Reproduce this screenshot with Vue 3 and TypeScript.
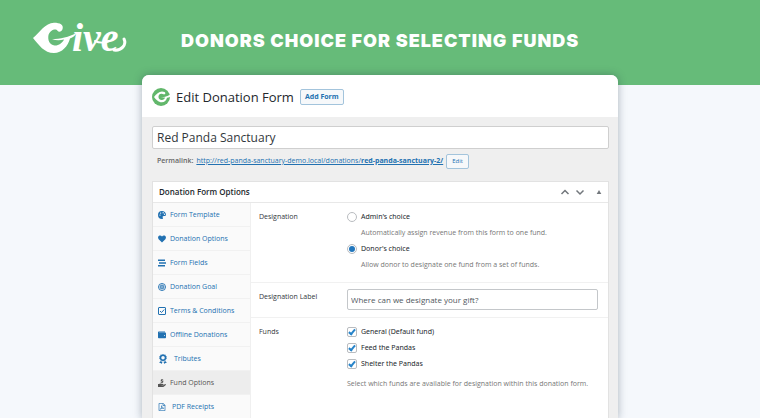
<script setup lang="ts">
import { ref } from 'vue'

interface Tab {
  id: string
  label: string
}

interface Choice {
  value: string
  label: string
  help: string
}

interface Fund {
  id: string
  label: string
  enabled: boolean
}

const tabs: Tab[] = [
  { id: 'template', label: 'Form Template' },
  { id: 'options', label: 'Donation Options' },
  { id: 'fields', label: 'Form Fields' },
  { id: 'goal', label: 'Donation Goal' },
  { id: 'terms', label: 'Terms & Conditions' },
  { id: 'offline', label: 'Offline Donations' },
  { id: 'tributes', label: 'Tributes' },
  { id: 'funds', label: 'Fund Options' },
  { id: 'pdf', label: 'PDF Receipts' },
]

const choices: Choice[] = [
  { value: 'admin', label: "Admin's choice", help: 'Automatically assign revenue from this form to one fund.' },
  { value: 'donor', label: "Donor's choice", help: 'Allow donor to designate one fund from a set of funds.' },
]

const activeTab = ref('funds')
const formTitle = ref('Red Panda Sanctuary')
const designation = ref('donor')
const designationLabel = ref('Where can we designate your gift?')
const funds = ref<Fund[]>([
  { id: 'general', label: 'General (Default fund)', enabled: true },
  { id: 'feed', label: 'Feed the Pandas', enabled: true },
  { id: 'shelter', label: 'Shelter the Pandas', enabled: true },
])
</script>

<template>
  <div class="page">
    <header class="banner">
      <svg class="brand" viewBox="0 0 96 36" role="img" aria-label="Give">
        <path class="leaf" d="M0 15C7 9 12 0 21-.3c6 0 10 2 8.500 6.500-.8 2.500-3.500 3.300-5 1.600C23 5 17 7 15.500 12c-1 5 1 10 6 10.500 4 .3 8-2.500 9.500-6-4 1-8 1-12-.3 8 0 17-2 25-6.700-1.500 3-4 5-7 6C35 23 29 30 21 30 11 30 6 22 0 15Z" />
        <text class="script" x="39" y="28">ive</text>
        <path class="tail" d="M81 27c7 1 13-5 10-11" />
        <path class="swash" d="M62 18c4 2 10 2 14 0" />
      </svg>
      <h1 class="headline">DONORS CHOICE FOR SELECTING FUNDS</h1>
    </header>

    <main class="stage">
      <section class="card">
        <div class="card-head">
          <svg class="mark" viewBox="0 0 18 18" aria-hidden="true">
            <circle cx="9" cy="9" r="9" fill="#62b76b" />
            <path d="M2 9C4 6 7 3.500 10 3.500c2 0 3.500.7 3.300 1.900-.2 1.300-1.800 1-2.700.6C8 5.200 6.200 7 6.500 9.300c.3 2.200 2.400 3.300 4.300 2.500 1.200-.5 1.900-1.400 2.300-2.400H8.500c3 0 6-.8 9.500-2.600v2.100c-1 .5-2 .8-3 .9-.5 2.700-2.500 4.500-5.200 4.500C6.300 14.300 4 11.500 2 9Z" fill="#fff" />
          </svg>
          <h2 class="card-title">Edit Donation Form</h2>
          <button class="btn btn-add" type="button">Add Form</button>
        </div>

        <div class="card-body">
          <input v-model="formTitle" class="title-input" type="text" aria-label="Form title" />
          <div class="permalink">
            <strong>Permalink:</strong>
            <a href="#permalink">http://red-panda-sanctuary-demo.local/donations/<b>red-panda-sanctuary-2/</b></a>
            <button class="btn btn-edit" type="button">Edit</button>
          </div>

          <section class="panel">
            <div class="panel-head">
              <h3>Donation Form Options</h3>
              <div class="panel-actions">
                <button type="button" aria-label="Move up">
                  <svg viewBox="0 0 10 10"><path d="M1.500 7 5 3.500 8.500 7" /></svg>
                </button>
                <button type="button" aria-label="Move down">
                  <svg viewBox="0 0 10 10"><path d="M1.500 3.500 5 7l3.500-3.500" /></svg>
                </button>
                <button class="toggle" type="button" aria-label="Toggle panel">
                  <svg viewBox="0 0 10 10"><path d="M2.700 7 5 3l2.300 4Z" fill="#72777c" stroke="none" /></svg>
                </button>
              </div>
            </div>

            <div class="panel-body">
              <nav class="tabs">
                <a
                  v-for="tab in tabs"
                  :key="tab.id"
                  :href="'#' + tab.id"
                  :class="['tab', 'tab-' + tab.id, { active: tab.id === activeTab }]"
                  @click.prevent="activeTab = tab.id"
                >
                  <svg class="tab-icon" viewBox="0 0 16 16" aria-hidden="true">
                    <path v-if="tab.id === 'template'" fill-rule="evenodd" d="M8 0a8 8 0 1 0 0 16c2 0 2.300-1.400 1.600-2.600C8.700 11.500 9.500 10 11.500 10H14c1.300 0 2-.8 2-2.300C16 3.300 12.400 0 8 0ZM4 9.500a1.300 1.300 0 1 1 0-2.600 1.300 1.300 0 0 1 0 2.600ZM5.300 5.500a1.300 1.300 0 1 1 0-2.600 1.300 1.300 0 0 1 0 2.600Zm5 -.7a1.300 1.300 0 1 1 0-2.600 1.300 1.300 0 0 1 0 2.600Zm2.700 3a1.300 1.300 0 1 1 0-2.600 1.300 1.300 0 0 1 0 2.600Z" />
                    <path v-else-if="tab.id === 'options'" d="M8 15 1.300 8.300C-.6 6.200-.2 3 2 1.700 4.200.5 6.600 1.300 8 3.200 9.400 1.300 11.800.5 14 1.700c2.200 1.300 2.600 4.500.7 6.600Z" />
                    <path v-else-if="tab.id === 'fields'" d="M0 1h14v3.200H0zM2 6.400h14v3.200H2zM0 11.800h14V15H0z" />
                    <g v-else-if="tab.id === 'goal'" fill="none" stroke="currentColor" stroke-width="1.900">
                      <circle cx="8" cy="8" r="7" />
                      <circle cx="8" cy="8" r="3.800" />
                      <circle cx="8" cy="8" r="1" />
                    </g>
                    <g v-else-if="tab.id === 'terms'" fill="none" stroke="currentColor" stroke-width="2">
                      <rect x="1" y="1" width="14" height="14" rx="1" />
                      <path d="m4 8 3 3 5.500-6" />
                    </g>
                    <path v-else-if="tab.id === 'offline'" fill-rule="evenodd" d="M1.500 1H14v1.500H2V3h12.500c1 0 1.500.6 1.500 1.500v8.500c0 1-.6 1.500-1.500 1.500h-13C.6 14.500 0 14 0 13V2.500C0 1.600.6 1 1.500 1ZM13 8a1 1 0 1 0 0 2 1 1 0 0 0 0-2Z" />
                    <path v-else-if="tab.id === 'tributes'" fill-rule="evenodd" d="m8 0 1.700 1 2-.2.7 1.900 1.600 1.200-.6 1.900.6 1.900-1.600 1.200-.7 1.900-2-.2L8 11.600l-1.700-1-2 .2-.7-1.900L2 7.700l.6-1.900L2 3.900l1.600-1.200.7-1.900 2 .2ZM8 3a2.800 2.800 0 1 0 0 5.600A2.800 2.800 0 0 0 8 3ZM3.500 11.500l2.500.4 1.200.9L5.500 16l-1.300-1.700L2 14.500Zm9 0-2.500.4-1.200.9 1.700 3.200 1.300-1.700 2.200.2Z" />
                    <path v-else-if="tab.id === 'funds'" d="M7 0h2v1c1 .2 1.600.6 2 1L10 3.300c-1-.7-2-.8-2.200-.3 0 .4.5.5 1.500.8 2.200.7 2 3.200-.3 3.800v1H7v-1c-1-.2-1.700-.6-2.200-1.100l1-1.300c1 .8 2.300.9 2.500.3 0-.4-.5-.6-1.500-.9C4.700 3.800 5 1.500 7 1ZM0 10h2.500C4.500 8.500 6 9 8 10h2.500c1 .2 1 1.800 0 2H7v.7h4l3-2.500c1-.6 2.400.5 1.600 1.600L12 15.200c-.4.400-1 .6-1.500.6H0Z" />
                    <g v-else fill="none" stroke="currentColor" stroke-width="1.400">
                      <path d="M2 .8h8.500L14 4.300v11H2ZM10 1v4h4" />
                      <path d="M4.500 12.500C7 10 8 7 7.500 5.500c-.7-.5-1 1 .2 3 1 1.600 3 2.500 3.800 2.200.5-.8-3-.8-7 1.800Z" />
                    </g>
                  </svg>
                  <span>{{ tab.label }}</span>
                </a>
              </nav>

              <form class="settings" @submit.prevent>
                <div class="row" role="radiogroup" aria-labelledby="designation-heading">
                  <span id="designation-heading" class="row-label">Designation</span>
                  <div class="controls">
                    <template v-for="choice in choices" :key="choice.value">
                      <label class="choice">
                        <input v-model="designation" type="radio" name="designation" :value="choice.value" />
                        {{ choice.label }}
                      </label>
                      <p class="help indent">{{ choice.help }}</p>
                    </template>
                  </div>
                </div>

                <div class="row row-text">
                  <label class="row-label" for="designation-label">Designation Label</label>
                  <input id="designation-label" v-model="designationLabel" class="text-input" type="text" />
                </div>

                <div class="row row-funds" role="group" aria-labelledby="funds-heading">
                  <span id="funds-heading" class="row-label">Funds</span>
                  <div class="controls">
                    <label v-for="fund in funds" :key="fund.id" class="choice">
                      <input v-model="fund.enabled" type="checkbox" />
                      {{ fund.label }}
                    </label>
                    <p class="help summary">Select which funds are available for designation within this donation form.</p>
                  </div>
                </div>
              </form>
            </div>
          </section>
        </div>
      </section>
    </main>
  </div>
</template>

<style>
body {
  background: #f5f8fc;
}
</style>

<style scoped>
.page,
.page * {
  box-sizing: border-box;
}

.page {
  display: flex;
  flex-direction: column;
  min-height: 100vh;
  background: #f5f8fc;
  color: #32373c;
  font: 7px/16px "Open Sans", "Noto Sans", sans-serif;
}

h1,
h2,
h3,
p {
  margin: 0;
}

button,
input {
  font-family: inherit;
}

.banner {
  display: grid;
  grid-template-columns: 148px 1fr;
  align-items: center;
  height: 85px;
  padding: 0 0 4px 33px;
  background: #66bb79;
}

.brand {
  width: 96px;
  height: 36px;
  overflow: visible;
}

.leaf,
.script {
  fill: #fff;
}

.script {
  font: italic 700 40px "Liberation Serif", serif;
}

.swash,
.tail {
  fill: none;
  stroke: #fff;
  stroke-width: 2;
  stroke-linecap: round;
}

.tail {
  stroke-width: 3;
}

.headline {
  color: #fff;
  font: 900 18px/24px Inter, sans-serif;
  letter-spacing: 1px;
  white-space: nowrap;
}

.stage {
  display: flex;
  flex: 1;
  margin-top: -10px;
  padding: 0 142px;
}

.card {
  display: flex;
  flex: 1;
  flex-direction: column;
  min-width: 0;
  border-radius: 7px 7px 0 0;
  background: #efefef;
  box-shadow: 0 0 8px rgba(30, 50, 70, 0.35);
}

.card-head {
  display: flex;
  align-items: center;
  gap: 6px;
  height: 42px;
  padding: 2px 10px 0;
  border-radius: 7px 7px 0 0;
  background: #fff;
}

.mark {
  width: 18px;
  height: 18px;
}

.card-title {
  color: #23282d;
  font-size: 13px;
  font-weight: 400;
}

.btn {
  border: 1px solid #a3c4dc;
  border-radius: 2px;
  background: #f6f8fa;
  color: #2271b1;
}

.btn-add {
  height: 16px;
  padding: 0 4px;
  font-size: 7px;
  font-weight: 700;
  line-height: 14px;
}

.card-body {
  display: flex;
  flex: 1;
  flex-direction: column;
  padding: 9px 9px 0 10px;
}

.title-input {
  width: 100%;
  height: 23px;
  padding: 0 4px;
  border: 1px solid #cfcfcf;
  border-radius: 2px;
  background: #fff;
  color: #32373c;
  font-size: 12px;
}

.permalink {
  display: flex;
  align-items: center;
  gap: 3px;
  height: 24px;
  padding-left: 5px;
  color: #666;
}

.permalink strong {
  font-weight: 600;
}

.permalink a {
  color: #2271b1;
}

.btn-edit {
  height: 15px;
  padding: 0 5px;
  font-size: 6px;
  line-height: 13px;
}

.panel {
  display: flex;
  flex: 1;
  flex-direction: column;
  margin-top: 8px;
  border: solid #e2e2e2;
  border-width: 1px 1px 0;
  background: #fff;
}

.panel-head {
  display: flex;
  align-items: center;
  justify-content: space-between;
  height: 21px;
  padding: 0 4px 0 6px;
  border-bottom: 1px solid #e8e8e8;
}

.panel-head h3 {
  color: #23282d;
  font-size: 8px;
  font-weight: 600;
}

.panel-actions {
  display: flex;
  gap: 5px;
}

.panel-actions button {
  width: 10px;
  height: 10px;
  padding: 0;
  border: 0;
  background: none;
}

.panel-actions .toggle {
  margin-left: 4px;
}

.panel-actions svg {
  display: block;
  fill: none;
  stroke: #72777c;
  stroke-width: 1.500;
}

.panel-body {
  display: grid;
  flex: 1;
  grid-template-columns: 98px 1fr;
}

.tabs {
  border-right: 1px solid #f0f0f0;
  background: #fafafa;
}

.tab {
  display: flex;
  align-items: center;
  gap: 4px;
  height: 24px;
  padding-left: 5px;
  border-bottom: 1px solid #f1f1f1;
  color: #2271b1;
  text-decoration: none;
  white-space: nowrap;
}

.tab-icon {
  width: 8px;
  height: 8px;
  fill: currentColor;
}

.tab-tributes,
.tab-pdf {
  gap: 6px;
}

.tab-tributes .tab-icon {
  width: 10px;
  height: 10px;
}

.tab.active {
  background: #ededed;
  color: #555;
}

.row {
  display: grid;
  grid-template-columns: 88px 1fr;
  padding: 6px 10px 0 8px;
  border-bottom: 1px solid #f1f1f1;
}

.row:first-child {
  padding-bottom: 9px;
}

.row-label {
  line-height: 16px;
}

.choice {
  display: flex;
  align-items: center;
  gap: 4px;
  height: 16px;
  color: #23282d;
  font-family: "Noto Sans", sans-serif;
}

.choice input {
  display: grid;
  place-items: center;
  appearance: none;
  width: 10px;
  height: 10px;
  margin: 0;
  border: 1px solid #b9bcc0;
  border-radius: 2px;
  background: #fff;
}

.choice input[type='radio'] {
  border-radius: 50%;
}

.choice input[type='radio']:checked::before {
  width: 6px;
  height: 6px;
  border-radius: 50%;
  background: #2277bd;
  content: '';
}

.choice input[type='checkbox']:checked::before {
  width: 2px;
  height: 5px;
  margin-bottom: 1px;
  border: solid #2683c9;
  border-width: 0 2px 2px 0;
  content: '';
  transform: rotate(40deg);
}

.help {
  color: #777;
  line-height: 16px;
}

.indent {
  padding-left: 14px;
}

.row-text {
  padding-bottom: 7px;
}

.text-input {
  width: 100%;
  height: 21px;
  padding: 0 3px;
  border: 1px solid #c4c7ca;
  border-radius: 2px;
  background: #fff;
  color: #50575e;
  font-size: 8px;
}

.row-funds {
  border-bottom: 0;
}

.summary {
  margin-top: 4px;
}
</style>
